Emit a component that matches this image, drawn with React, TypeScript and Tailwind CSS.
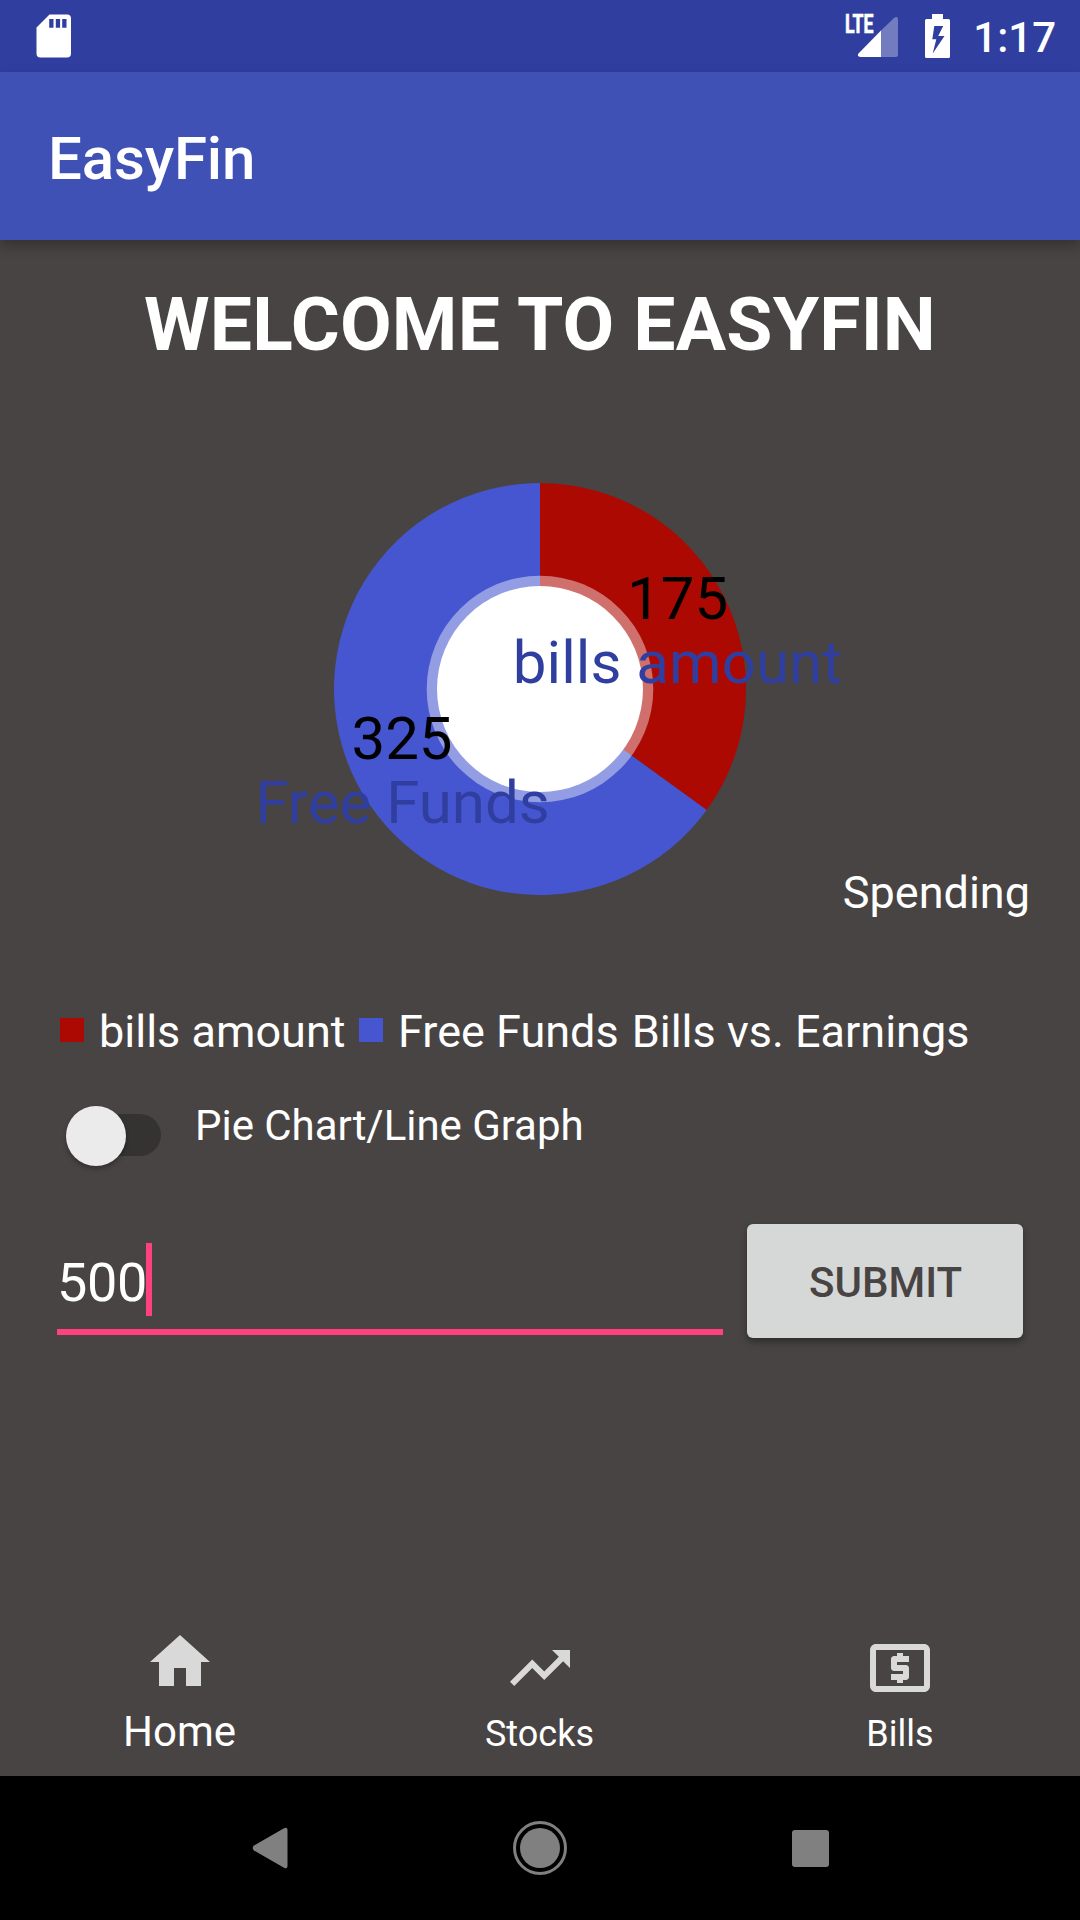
import React from "react";

const CX = 540;
const CY = 689;
const R = 206;

const point = (deg: number, r: number) => {
  const a = (deg * Math.PI) / 180;
  return `${CX + r * Math.cos(a)} ${CY + r * Math.sin(a)}`;
};

function StatusBar() {
  return (
    <header className="flex h-[72px] shrink-0 items-center justify-between bg-[#303f9f] text-white">
      <svg className="ml-9 h-[44px] w-[36px]" viewBox="0.500 0 36 44" fill="currentColor">
        <path
          fillRule="evenodd"
          d="M14 0.500H31.500a4 4 0 0 1 4 4V39.500a4 4 0 0 1-4 4H5a4 4 0 0 1-4-4V13.500Z M13.700 5v8.700h4.300V5Z M20.300 5v8.700h4.300V5Z M26.700 5v8.700h4.300V5Z"
        />
      </svg>
      <div className="flex items-center">
        <svg className="h-[72px] w-[56px]" viewBox="845 0 56 72" fill="currentColor">
          <path d="M881 30.500 894.600 17.600Q898 15.800 898 19.500V55a2 2 0 0 1-2 2H881Z" fillOpacity="0.32" />
          <path d="M881 30.500V57H860.500Q856.500 56.500 858.500 53.500Z" />
          <text
            x="845"
            y="33.200"
            fontFamily="Roboto, sans-serif"
            fontWeight="700"
            fontSize="25.500"
            stroke="currentColor"
            strokeWidth="0.700"
            textLength="28.500"
            lengthAdjust="spacingAndGlyphs"
          >
            LTE
          </text>
        </svg>
        <svg className="ml-6 h-[44px] w-[25px]" viewBox="0 0 25 44" fill="currentColor">
          <path
            fillRule="evenodd"
            d="M7 0H18V5H23.500Q25 5 25 6.500V42.500Q25 44 23.500 44H1.500Q0 44 0 42.500V6.500Q0 5 1.500 5H7Z M9.300 12 7.300 25.200H11.300L7.700 39.500 19.500 22H13.200L18.200 12Z"
          />
        </svg>
        <span className="mr-6 ml-[23px] pt-[3px] text-[42px] leading-[48px] font-medium">1:17</span>
      </div>
    </header>
  );
}

function PieChart() {
  return (
    <svg className="h-[560px] w-full shrink-0" viewBox="0 408 1080 560" fontFamily="Roboto, sans-serif">
      <path d={`M${CX} ${CY}L${point(-90, R)}A${R} ${R} 0 0 1 ${point(36, R)}Z`} fill="#ad0903" />
      <path d={`M${CX} ${CY}L${point(36, R)}A${R} ${R} 0 1 1 ${point(-90, R)}Z`} fill="#4656d0" />
      <circle cx={CX} cy={CY} r="113.3" fill="#fff" fillOpacity="0.42" />
      <circle cx={CX} cy={CY} r="103" fill="#fff" />
      <g fontSize="60" textAnchor="middle">
        <text x="677.7" y="619">175</text>
        <text x="677.3" y="683" fill="#303f9f" textLength="329" lengthAdjust="spacing">bills amount</text>
        <text x="402" y="759">325</text>
        <text x="402.6" y="823" fill="#303f9f">Free Funds</text>
      </g>
      <text x="1030" y="908" fontSize="45" textAnchor="end" fill="#fff">Spending</text>
    </svg>
  );
}

function Legend() {
  return (
    <div className="flex h-[124px] shrink-0 items-center pl-[60px] text-[45px] leading-[54px] whitespace-nowrap">
      <i className="size-6 bg-[#ad0903]" />
      <span className="ml-[15px] w-[245px] pt-[3px]">bills amount</span>
      <i className="ml-[15px] size-6 bg-[#4656d0]" />
      <span className="ml-[15px] pt-[3px]">Free Funds</span>
      <span className="ml-[13px] pt-[3px]">Bills vs. Earnings</span>
    </div>
  );
}

function ToggleRow() {
  return (
    <div className="flex h-[86px] shrink-0 items-center pl-[65.500px]">
      <button className="flex h-[42px] w-[95.500px] items-center rounded-full bg-linear-to-r from-transparent from-15% to-[#343331] to-15%">
        <span className="mt-px size-[60px] shrink-0 rounded-full bg-[#ebebeb] shadow-[0_3px_5px_rgba(0,0,0,0.3)]" />
      </button>
      <span className="ml-[34px] pb-[19px] text-[42px] leading-[50px] tracking-[-0.04px]">Pie Chart/Line Graph</span>
    </div>
  );
}

function AmountForm() {
  return (
    <div className="flex shrink-0 items-start pt-[46px] pl-[57px]">
      <div className="flex h-[111px] w-[666px] border-b-[6px] border-[#ff4081] pt-[19px]">
        <span className="w-[89px] pt-[8px] text-[54px] leading-[64px] tracking-[-0.3px]">500</span>
        <span className="h-[73px] w-[6px] bg-[#ff4081]" />
      </div>
      <button className="ml-6 h-[114px] w-[276px] rounded-[6px] bg-[#d6d7d7] pt-[3px] pl-px text-[42px] font-medium text-[#484443] shadow-[0_4px_7px_rgba(0,0,0,0.35)]">
        SUBMIT
      </button>
    </div>
  );
}

function TabBar() {
  return (
    <nav className="grid h-[168px] shrink-0 grid-cols-3">
      <a className="flex flex-col items-center pt-[18px]">
        <svg className="size-[72px]" viewBox="0 0 24 24" fill="#d9d9d9">
          <path d="M10 20v-6h4v6h5v-8h3L12 3 2 12h3v8z" />
        </svg>
        <span className="mt-[10px] pr-px text-[42px] leading-[48px]">Home</span>
      </a>
      <a className="flex flex-col items-center pt-6">
        <svg className="size-[72px]" viewBox="0 0 24 24" fill="#d9d9d9">
          <path d="M16 6l2.290 2.290-4.880 4.880-4-4L2 16.590 3.410 18l6-6 4 4 6.300-6.290L22 12V6z" />
        </svg>
        <span className="mt-[9px] pr-px text-[36px] leading-[42px]">Stocks</span>
      </a>
      <a className="flex flex-col items-center pt-6">
        <svg className="size-[72px]" viewBox="0 0 24 24" fill="#d9d9d9">
          <path d="M11 17h2v-1h1c.55 0 1-.45 1-1v-3c0-.55-.45-1-1-1h-3v-1h4V8h-2V7h-2v1h-1c-.55 0-1 .45-1 1v3c0 .55.45 1 1 1h3v1H9v2h2v1zm9-13H4c-1.110 0-1.990.89-1.990 2L2 18c0 1.110.89 2 2 2h16c1.110 0 2-.89 2-2V6c0-1.110-.89-2-2-2zm0 14H4V6h16v12z" />
        </svg>
        <span className="mt-[9px] text-[36px] leading-[42px]">Bills</span>
      </a>
    </nav>
  );
}

function SystemNav() {
  return (
    <footer className="flex h-36 shrink-0 items-center justify-between bg-black pr-[251.500px] pl-[252px] text-[#808080]">
      <svg className="h-[42px] w-[36px]" viewBox="0 0 36 42" fill="currentColor">
        <path d="M32 1.200Q35.500-.5 35.500 3V39Q35.500 42.500 32 40.800L2 23.500Q-.7 21 2 18.500Z" />
      </svg>
      <svg className="size-[54px]" viewBox="0 0 54 54" fill="currentColor">
        <circle cx="27" cy="27" r="25.500" fill="none" stroke="currentColor" strokeWidth="3" />
        <circle cx="27" cy="27" r="20" />
      </svg>
      <span className="size-[37px] rounded-[3px] bg-current" />
    </footer>
  );
}

export default function App() {
  return (
    <div className="flex h-[1920px] w-[1080px] flex-col overflow-hidden bg-[#484443] font-[Roboto,sans-serif] text-white">
      <StatusBar />
      <div className="z-10 flex h-[168px] shrink-0 items-center bg-[#3f51b5] pt-[5px] pl-12 shadow-[0_6px_12px_rgba(0,0,0,0.28)]">
        <h1 className="text-[60px] leading-[70px] font-medium tracking-[-0.15px]">EasyFin</h1>
      </div>
      <main className="flex min-h-0 flex-1 flex-col">
        <h2 className="flex h-[168px] shrink-0 items-center justify-center text-[75px] font-bold tracking-[0.2px] whitespace-nowrap">
          WELCOME TO EASYFIN
        </h2>
        <PieChart />
        <Legend />
        <ToggleRow />
        <AmountForm />
      </main>
      <TabBar />
      <SystemNav />
    </div>
  );
}
